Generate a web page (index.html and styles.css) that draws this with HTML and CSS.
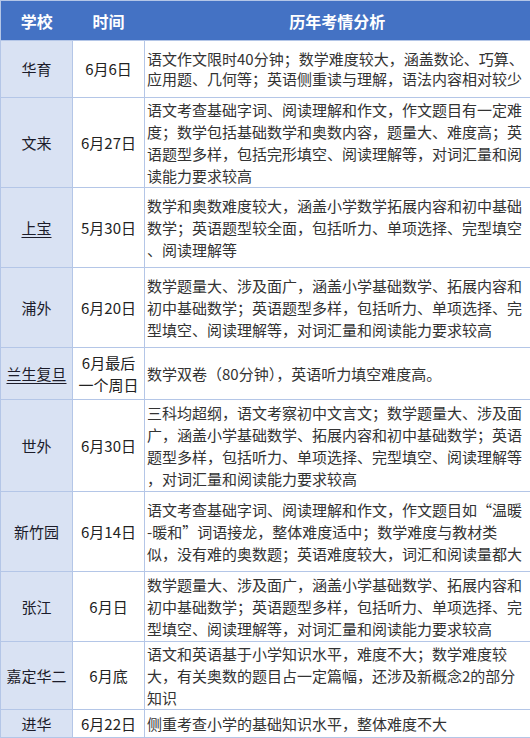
FILE: index.html
```html
<!DOCTYPE html>
<html lang="zh-CN">
<head>
<meta charset="utf-8">
<title>历年考情分析</title>
<link rel="stylesheet" href="styles.css">
</head>
<body>
<table class="exam">
  <colgroup>
    <col class="c-school">
    <col class="c-time">
    <col class="c-desc">
  </colgroup>
  <thead>
    <tr class="head">
      <th>学校</th>
      <th>时间</th>
      <th>历年考情分析</th>
    </tr>
  </thead>
  <tbody>
    <tr class="h57 tight">
      <td class="school">华育</td>
      <td class="time">6月6日</td>
      <td class="desc">语文作文限时40分钟；数学难度较大，涵盖数论、巧算、<br>应用题、几何等；英语侧重读与理解，语法内容相对较少</td>
    </tr>
    <tr class="h90">
      <td class="school">文来</td>
      <td class="time">6月27日</td>
      <td class="desc">语文考查基础字词、阅读理解和作文，作文题目有一定难<br>度；数学包括基础数学和奥数内容，题量大、难度高；英<br>语题型多样，包括完形填空、阅读理解等，对词汇量和阅<br>读能力要求较高</td>
    </tr>
    <tr class="h80">
      <td class="school"><span class="link">上宝</span></td>
      <td class="time">5月30日</td>
      <td class="desc">数学和奥数难度较大，涵盖小学数学拓展内容和初中基础<br>数学；英语题型较全面，包括听力、单项选择、完型填空<br>、阅读理解等</td>
    </tr>
    <tr class="h80">
      <td class="school">浦外</td>
      <td class="time">6月20日</td>
      <td class="desc">数学题量大、涉及面广，涵盖小学基础数学、拓展内容和<br>初中基础数学；英语题型多样，包括听力、单项选择、完<br>型填空、阅读理解等，对词汇量和阅读能力要求较高</td>
    </tr>
    <tr class="h52">
      <td class="school"><span class="link">兰生复旦</span></td>
      <td class="time">6月最后<br>一个周日</td>
      <td class="desc">数学双卷（80分钟），英语听力填空难度高。</td>
    </tr>
    <tr class="h92">
      <td class="school">世外</td>
      <td class="time">6月30日</td>
      <td class="desc">三科均超纲，语文考察初中文言文；数学题量大、涉及面<br>广，涵盖小学基础数学、拓展内容和初中基础数学；英语<br>题型多样，包括听力、单项选择、完型填空、阅读理解等<br>，对词汇量和阅读能力要求较高</td>
    </tr>
    <tr class="h80">
      <td class="school">新竹园</td>
      <td class="time">6月14日</td>
      <td class="desc">语文考查基础字词、阅读理解和作文，作文题目如“温暖<br>-暖和”词语接龙，整体难度适中；数学难度与教材类<br>似，没有难的奥数题；英语难度较大，词汇和阅读量都大</td>
    </tr>
    <tr class="h70">
      <td class="school">张江</td>
      <td class="time">6月日</td>
      <td class="desc">数学题量大、涉及面广，涵盖小学基础数学、拓展内容和<br>初中基础数学；英语题型多样，包括听力、单项选择、完<br>型填空、阅读理解等，对词汇量和阅读能力要求较高</td>
    </tr>
    <tr class="h68">
      <td class="school">嘉定华二</td>
      <td class="time">6月底</td>
      <td class="desc">语文和英语基于小学知识水平，难度不大；数学难度较<br>大，有关奥数的题目占一定篇幅，还涉及新概念2的部分<br>知识</td>
    </tr>
    <tr class="h28">
      <td class="school">进华</td>
      <td class="time">6月22日</td>
      <td class="desc">侧重考查小学的基础知识水平，整体难度不大</td>
    </tr>
  </tbody>
</table>
</body>
</html>
```
FILE: styles.css
```css
html, body {
  margin: 0;
  padding: 0;
  background: #ffffff;
}

body {
  font-family: "Noto Sans CJK SC", "Noto Sans", sans-serif;
}

.exam {
  width: 530px;
  table-layout: fixed;
  border-collapse: collapse;
  border: 1px solid #b4c6e7;
}

.c-school { width: 72px; }
.c-time { width: 72px; }
.c-desc { width: 386px; }

.head {
  height: 40px;
  background: #4472c4;
}

.head th {
  color: #ffffff;
  font-size: 16px;
  font-weight: 700;
  text-align: center;
  vertical-align: middle;
  padding: 0;
  border: none;
}

.exam td {
  border: 1px solid #b4c6e7;
  font-size: 15px;
  line-height: 22px;
  vertical-align: middle;
  padding: 0;
}

.school {
  background: #d9e2f3;
  color: #1c1c2a;
  text-align: center;
}

.link {
  text-decoration: underline;
  text-decoration-thickness: 1px;
  text-underline-offset: 3px;
}

.time {
  color: #222222;
  text-align: center;
}

.desc {
  color: #333333;
  text-align: left;
  white-space: nowrap;
  padding-left: 2px !important;
  letter-spacing: 0;
}

.tight .desc { line-height: 20px; }

.h57 { height: 57px; }
.h90 { height: 90px; }
.h80 { height: 80px; }
.h52 { height: 52px; }
.h92 { height: 92px; }
.h70 { height: 70px; }
.h68 { height: 68px; }
.h28 { height: 28px; }
```
